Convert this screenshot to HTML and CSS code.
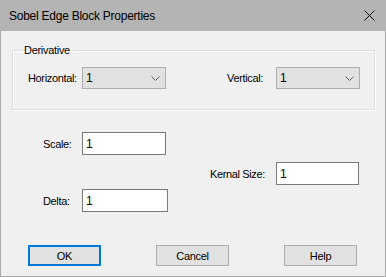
FILE: index.html
```html
<!DOCTYPE html>
<html lang="en">
<head>
  <meta charset="UTF-8" />
  <title>Sobel Edge Block Properties</title>
  <link rel="stylesheet" href="styles.css">
</head>
<body>
<div class="window">
  <div class="titlebar">
    <span class="title">Sobel Edge Block Properties</span>
    <svg class="close" width="11" height="11" viewBox="0 0 11 11">
      <path d="M0.5 0.5 L10.5 10.5 M10.5 0.5 L0.5 10.5" stroke="#111" stroke-width="1" fill="none"/>
    </svg>
  </div>

  <div class="dialog-body">
    <fieldset class="group">
      <legend>Derivative</legend>
      <div class="group-row">
        <div class="field">
          <label class="lbl lbl-horizontal">Horizontal:</label>
          <div class="combo">
            <span>1</span>
            <svg width="9" height="5" viewBox="0 0 9 5"><polyline points="0.5,0.5 4.5,4.5 8.5,0.5" fill="none" stroke="#606060" stroke-width="1"/></svg>
          </div>
        </div>
        <div class="field">
          <label class="lbl lbl-vertical">Vertical:</label>
          <div class="combo">
            <span>1</span>
            <svg width="9" height="5" viewBox="0 0 9 5"><polyline points="0.5,0.5 4.5,4.5 8.5,0.5" fill="none" stroke="#606060" stroke-width="1"/></svg>
          </div>
        </div>
      </div>
    </fieldset>

    <div class="row row-scale">
      <label class="lbl lbl-left">Scale:</label>
      <input class="text-input" type="text" value="1" />
    </div>
    <div class="row row-kernal">
      <label class="lbl">Kernal Size:</label>
      <input class="text-input narrow" type="text" value="1" />
    </div>
    <div class="row row-delta">
      <label class="lbl lbl-left">Delta:</label>
      <input class="text-input wide" type="text" value="1" />
    </div>

    <div class="buttons">
      <button class="btn btn-default">OK</button>
      <button class="btn">Cancel</button>
      <button class="btn">Help</button>
    </div>
  </div>
</div>
</body>
</html>
```

FILE: styles.css
```css
body {
  margin: 0;
  font-family: "Liberation Sans", Arial, sans-serif;
  background: #f0f0f0;
}
.window {
  width: 386px;
  height: 277px;
  box-sizing: border-box;
  border: 1px solid #aaaaaa;
  border-top: none;
  background: #f0f0f0;
}
.titlebar {
  height: 31px;
  margin: 0 -1px;
  background: #b4b4b4;
  display: flex;
  align-items: center;
  justify-content: space-between;
  padding: 0 11px 0 9px;
}
.title {
  font-size: 12px;
  letter-spacing: -0.25px;
  color: #000;
}
.close {
  margin-bottom: 1px;
}
.dialog-body {
  padding: 13px 10px 0 11px;
}
.lbl {
  font-size: 11px;
  letter-spacing: -0.35px;
  color: #000;
}
.group {
  margin: 0;
  padding: 10px 14px 20px 15px;
  border: 1px solid #dcdcdc;
  box-shadow: inset 1px 1px 0 #fff, 1px 1px 0 #fff;
}
.group legend {
  font-size: 11px;
  letter-spacing: -0.3px;
  margin-left: -6px;
  padding: 0 2px;
  line-height: 13px;
}
.group-row {
  display: flex;
  justify-content: space-between;
}
.field {
  display: flex;
  align-items: center;
}
.lbl-horizontal {
  width: 54px;
}
.lbl-vertical {
  margin-right: 13px;
}
.combo {
  width: 84px;
  height: 22px;
  box-sizing: border-box;
  border: 1px solid #adadad;
  background: #e1e1e1;
  display: flex;
  align-items: center;
  justify-content: space-between;
  padding: 0 5px 0 3px;
  font-size: 12px;
}
.row {
  display: flex;
  align-items: center;
  height: 23px;
}
.row-scale {
  margin-top: 22px;
  padding-left: 31px;
}
.row-kernal {
  margin-top: 7px;
  justify-content: flex-end;
  padding-right: 16px;
}
.row-kernal .lbl {
  margin-right: 11px;
}
.row-delta {
  margin-top: 4px;
  padding-left: 31px;
}
.lbl-left {
  width: 39px;
}
.text-input {
  width: 84px;
  height: 23px;
  box-sizing: border-box;
  border: 1px solid #7a7a7a;
  background: #fff;
  padding: 0 3px;
  margin: 0;
  font-family: "Liberation Sans", Arial, sans-serif;
  font-size: 12px;
  color: #000;
  outline: none;
}
.text-input.narrow {
  width: 83px;
}
.text-input.wide {
  width: 86px;
}
.buttons {
  display: flex;
  justify-content: space-between;
  margin-top: 33px;
  padding: 0 18px 0 16px;
}
.btn {
  width: 73px;
  height: 21px;
  box-sizing: border-box;
  border: 1px solid #adadad;
  background: #e1e1e1;
  font-family: "Liberation Sans", Arial, sans-serif;
  font-size: 11px;
  letter-spacing: -0.3px;
  color: #000;
  padding: 0;
  margin: 0;
}
.btn-default {
  border: 2px solid #0078d7;
}
```
